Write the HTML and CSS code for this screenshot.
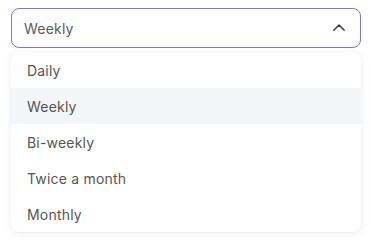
FILE: index.html
```html
<!DOCTYPE html>
<html>
<head>
<meta charset="utf-8">
<link rel="stylesheet" href="styles.css">
</head>
<body>
<div class="select">
  <div class="trigger">
    <span class="value">Weekly</span>
    <svg class="chev" width="12" height="7" viewBox="0 0 12 7"><path d="M0.8 6.2 L6 1 L11.2 6.2" fill="none" stroke="#3a3a3a" stroke-width="1.5" stroke-linecap="round" stroke-linejoin="round"/></svg>
  </div>
  <ul class="menu">
    <li class="item">Daily</li>
    <li class="item active">Weekly</li>
    <li class="item">Bi-weekly</li>
    <li class="item">Twice a month</li>
    <li class="item">Monthly</li>
  </ul>
</div>
</body>
</html>
```
FILE: styles.css
```css
* { box-sizing: border-box; }
html, body { margin: 0; padding: 0; background: #fff; }
body {
  font-family: "Inter", "Open Sans", sans-serif;
  color: #555;
  padding: 8px 11px;
}
.select { width: 350px; }
.trigger {
  height: 40px;
  border: 1.2px solid #8170ef;
  border-radius: 8px;
  display: flex;
  align-items: center;
  justify-content: space-between;
  padding: 0 15px 0 12px;
  font-size: 14px;
  color: #5b5b5b;
  letter-spacing: 0.2px;
}
.chev { display: block; margin-top: -1px; }
.menu {
  list-style: none;
  margin: 4px 0 0;
  padding: 0;
  border-radius: 8px;
  box-shadow: 0 2px 8px rgba(100, 100, 200, 0.10), 0 0 2px rgba(100,100,200,0.08);
  overflow: hidden;
  background: #fff;
}
.item {
  height: 36px;
  display: flex;
  align-items: center;
  padding-left: 16px;
  font-size: 14px;
  color: #555;
  letter-spacing: 0.2px;
}
.item.active { background: #f4f5f7; }
```
